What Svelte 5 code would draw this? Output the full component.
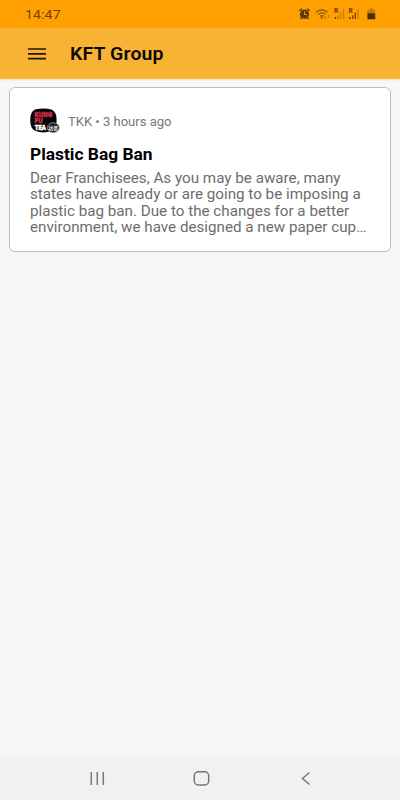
<script>
  const appName = 'KFT Group';
  const posts = [
    {
      author: 'TKK',
      age: '3 hours ago',
      title: 'Plastic Bag Ban',
      lines: [
        'Dear Franchisees, As you may be aware, many',
        'states have already or are going to be imposing a',
        'plastic bag ban. Due to the changes for a better',
        'environment, we have designed a new paper cup…',
      ],
    },
  ];
</script>

<div class="screen">
  <div class="status">
    <span class="clock wide">14:47</span>
    <svg class="status-icons" width="80" height="16" viewBox="298 6 80 16" aria-hidden="true">
      <!-- alarm -->
      <circle cx="304.5" cy="14.2" r="4.6" fill="#5e3a05" />
      <path d="M299.3 11 301.8 8.9M309.7 11 307.2 8.9M301.5 17.8 300.5 18.9M307.5 17.8 308.5 18.9" stroke="#5e3a05" stroke-width="1.5" />
      <path d="M304.500 11.500v3h2.300" fill="none" stroke="#f09a00" stroke-width="1" />
      <!-- wifi -->
      <g fill="none" stroke="#805008" stroke-width="1.2">
        <path d="M316 12.2Q321.8 7.4 327.6 12.2M318 14.4Q321.8 11.2 325.6 14.4M320 16.4Q321.8 15 323.6 16.4" />
        <path d="M325.2 16v3M328.4 18v-3" stroke="#c67d04" />
      </g>
      <circle cx="321.8" cy="17.8" r="1" fill="#805008" />
      <!-- signal bars, one set per SIM -->
      {#each [334, 348.5] as x, i}
        <text {x} y="13" class="roam">R</text>
        <rect x={x + 0.8} y="17" width="1.4" height="2" fill="#5e3a05" />
        <rect x={x + 3.6} y="15.4" width="1.3" height="3.6" fill={i ? '#704606' : '#b87408'} />
        <rect x={x + 6.2} y="12.6" width="1.3" height="6.4" fill={i ? '#704606' : '#c67d04'} />
        <rect x={x + 9} y="9.5" width="1.3" height="9.5" fill="#c67d04" />
      {/each}
      <!-- battery -->
      <path d="M369.5 8.300h3.6v1.7h2.1v4h-7.8v-4h2.1z" fill="#c67d04" />
      <rect x="367.4" y="13.3" width="7.8" height="6" fill="#4b2e05" />
    </svg>
  </div>

  <header>
    <svg width="18" height="12" viewBox="0 0 18 12" aria-label="Menu">
      <path d="M0 1h18M0 5.8h18M0 10.6h18" stroke="#201704" stroke-width="1.7" />
    </svg>
    <h1 class="wide">{appName}</h1>
  </header>

  <main>
    {#each posts as post}
      <article>
        <div class="meta">
          <svg width="30" height="27" viewBox="0 0 30 27" aria-hidden="true">
            <path d="M5 1.6Q13-.6 21.5 1.6 26.8 3.8 26.6 12.3 26.8 20.3 22 22.8 13 26 5 22.8 .1 20.3 .3 12.3 .1 3.8 5 1.6z" fill="#070507" />
            <g class="logo">
              <text x="4.6" y="9" textLength="17.5" lengthAdjust="spacingAndGlyphs" class="red">KUNG</text>
              <text x="4.6" y="15.3" textLength="8" lengthAdjust="spacingAndGlyphs" class="red">FU</text>
              <text x="4.7" y="21.7" textLength="11.3" lengthAdjust="spacingAndGlyphs" class="white">TEA</text>
            </g>
            <ellipse cx="23.3" cy="19.7" rx="6" ry="5" fill="#222" stroke="#aaa" stroke-width=".7" />
            <text x="18.3" y="21.7" class="seal">功茶</text>
          </svg>
          <span class="age wide">{post.author} • {post.age}</span>
        </div>
        <h2 class="wide">{post.title}</h2>
        <p class="wide">
          {#each post.lines as line}
            <span>{line}</span>
          {/each}
        </p>
      </article>
    {/each}
  </main>

  <nav>
    <svg width="400" height="43" viewBox="0 0 400 43" fill="none" stroke="#777" stroke-width="1.5" aria-hidden="true">
      <path d="M91.3 15v13M97.3 15v13M103.3 15v13" />
      <rect x="194.3" y="14.8" width="14.4" height="13.2" rx="4" />
      <path d="M309.5 15.500 302.5 21.500 309.5 27.500" />
    </svg>
  </nav>
</div>

<style>
  :global(body) { margin: 0; }
  .screen {
    display: flex; flex-direction: column;
    width: 400px; height: 800px; overflow: hidden;
    background: #f7f7f7; font-family: Roboto, sans-serif;
  }
  /* slightly extended letterforms */
  .wide { transform: scaleX(1.085); transform-origin: left; }
  .status {
    display: flex; align-items: center; justify-content: space-between;
    box-sizing: border-box; height: 28px; padding: 0 22px 0 25px;
    background: #ffa000;
  }
  .clock { font-size: 13px; letter-spacing: .1px; color: #704109; }
  .roam { font-size: 6.5px; font-weight: 700; fill: #5e3a05; }
  header {
    display: flex; align-items: center; gap: 24px;
    box-sizing: border-box; height: 51px; padding-left: 28px;
    background: #f8b334; box-shadow: 0 1px 2px #f5dfb9;
  }
  h1 { margin: 0; font-size: 18px; font-weight: 600; letter-spacing: .1px; color: #0c0903; }
  main { flex: 1; padding: 8px 9px; }
  article {
    box-sizing: border-box; height: 165px; padding: 20px 20px 0;
    background: #fff; border: 1px solid #bdbdbd; border-radius: 6px;
  }
  .meta { display: flex; align-items: center; gap: 8px; height: 27px; font-size: 12px; color: #777; }
  .age { padding-top: 1px; }
  .logo { font-size: 6.4px; font-weight: 900; stroke-width: .4px; }
  .red { fill: #c9304a; stroke: #c9304a; }
  .white { fill: #fff; stroke: #fff; }
  .seal { font-family: "Noto Sans CJK TC", sans-serif; font-size: 5px; font-weight: 700; fill: #eee; }
  h2 { margin: 10px 0 4.5px; font-size: 16px; line-height: 20px; font-weight: 700; color: #000; }
  p { margin: 0; font-size: 14px; line-height: 16.5px; color: #6d6d6d; }
  p span { display: block; white-space: nowrap; }
  nav { height: 43px; background: #f1f1f1; }
</style>
